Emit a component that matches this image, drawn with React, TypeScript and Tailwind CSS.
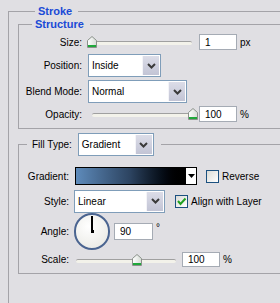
import React from 'react';

// Photoshop "Layer Style > Stroke" panel

function Chevron() {
  return (
    <svg width="9" height="6" viewBox="0 0 9 6">
      <path d="M1 1 L4.5 4.5 L8 1" fill="none" stroke="#3a3a3a" strokeWidth="2" />
    </svg>
  );
}

function Select({ value, className }: { value: string; className: string }) {
  return (
    <div className={`flex h-[23px] shrink-0 border border-[#7f9db9] bg-white ${className}`}>
      <span className="flex flex-1 items-center pl-[3px]">{value}</span>
      <div className="m-px flex w-[17px] items-center justify-center border-l border-[#f4f4f8] bg-gradient-to-b from-[#dcdde8] to-[#c2c4d5]">
        <Chevron />
      </div>
    </div>
  );
}

function Thumb({ className }: { className: string }) {
  return (
    <svg width="10" height="12" viewBox="0 0 10 12" className={className}>
      <defs>
        <linearGradient id="thumbg" x1="0" y1="0" x2="1" y2="0">
          <stop offset="0" stopColor="#ffffff" />
          <stop offset="1" stopColor="#d6dcd6" />
        </linearGradient>
      </defs>
      <path d="M5 0.5 L9.5 4.5 V11.5 H0.5 V4.5 Z" fill="url(#thumbg)" stroke="#8a918a" />
      <rect x="1" y="9" width="8" height="2" fill="#1fa83a" />
    </svg>
  );
}

function Slider({ className, thumb }: { className: string; thumb: string }) {
  return (
    <div className={`relative h-[12px] shrink-0 ${className}`}>
      <div className="absolute left-[5px] right-[5px] top-[5px] h-[4px] rounded-[2px] border-t border-[#a0a0a0] bg-[#f3f2ea]" />
      <Thumb className={`absolute top-0 ${thumb}`} />
    </div>
  );
}

function NumBox({ value, className }: { value: string; className: string }) {
  return (
    <div className={`flex shrink-0 items-center border border-[#a5abb4] bg-white pl-[5px] ${className}`}>
      {value}
    </div>
  );
}

function Check({ checked }: { checked?: boolean }) {
  return (
    <div className="flex h-[13px] w-[13px] shrink-0 items-center justify-center border border-[#1c5180] bg-gradient-to-br from-[#dcdcd7] to-white">
      {checked && (
        <svg width="11" height="11" viewBox="0 0 11 11">
          <path d="M2 5 L4.5 8 L9.5 2.5" fill="none" stroke="#21a121" strokeWidth="2" />
        </svg>
      )}
    </div>
  );
}

export default function App() {
  return (
    <div className="h-[303px] w-[280px] overflow-hidden bg-[#e0dfe3] font-['Liberation_Sans',Arial,sans-serif] text-[10px] leading-[13px] text-black">
      {/* Stroke group */}
      <fieldset className="ml-[8px] mt-[5px] h-[320px] w-[300px] border-l border-t border-[#a4a3a8] pl-[9px]">
        <legend className="ml-[17px] pl-[3px] pr-[6px] text-[11px] font-bold text-[#1a4ad6]">Stroke</legend>

        {/* Structure */}
        <fieldset className="w-[280px] border-b border-l border-t border-[#a4a3a8] pb-[6px]">
          <legend className="ml-[13px] pl-[3px] pr-[6px] text-[11px] font-bold text-[#1a4ad6]">Structure</legend>

          <div className="mt-[3px] flex h-[16px] items-center">
            <span className="w-[63px] text-right">Size:</span>
            <Slider className="ml-[5px] w-[110px]" thumb="left-0" />
            <NumBox value="1" className="ml-[2px] h-[16px] w-[38px]" />
            <span className="ml-[3px]">px</span>
          </div>

          <div className="mt-[4px] flex h-[23px] items-center">
            <span className="w-[63px] text-right">Position:</span>
            <Select value="Inside" className="ml-[6px] w-[73px]" />
          </div>

          <div className="mt-[3px] flex h-[23px] items-center">
            <span className="w-[63px] text-right">Blend Mode:</span>
            <Select value="Normal" className="ml-[6px] w-[99px]" />
          </div>

          <div className="mt-[3px] flex h-[16px] items-center">
            <span className="w-[63px] text-right">Opacity:</span>
            <Slider className="ml-[5px] w-[110px]" thumb="left-[101px]" />
            <NumBox value="100" className="ml-[2px] h-[16px] w-[38px]" />
            <span className="ml-[3px]">%</span>
          </div>
        </fieldset>

        {/* Fill */}
        <fieldset className="mt-[4px] w-[280px] border-b border-l border-t border-[#a4a3a8] pb-[6px]">
          <legend className="ml-[8px] flex items-center pl-[5px] pr-[7px]">
            <span>Fill Type:</span>
            <Select value="Gradient" className="ml-[6px] w-[76px]" />
          </legend>

          <div className="mt-[11px] flex h-[18px] items-center">
            <span className="w-[50px] text-right">Gradient:</span>
            <div className="ml-[6px] flex h-[18px] w-[122px] border border-black">
              <div className="flex-1 bg-gradient-to-r from-[#5e8bbb] via-[#2c4360] to-black" />
              <div className="flex w-[11px] items-center justify-center border-l border-black bg-white">
                <svg width="7" height="4" viewBox="0 0 7 4">
                  <path d="M0 0 H7 L3.5 4 Z" fill="#000" />
                </svg>
              </div>
            </div>
            <div className="ml-[9px]">
              <Check />
            </div>
            <span className="ml-[3px]">Reverse</span>
          </div>

          <div className="mt-[5px] flex h-[22px] items-center">
            <span className="w-[50px] text-right">Style:</span>
            <Select value="Linear" className="ml-[5px] h-[22px] w-[91px]" />
            <div className="ml-[10px]">
              <Check checked />
            </div>
            <span className="ml-[3px]">Align with Layer</span>
          </div>

          <div className="mt-px flex h-[37px] items-center">
            <span className="w-[50px] text-right">Angle:</span>
            <div className="relative ml-[5px] flex h-[37px] w-[36px] shrink-0 justify-center rounded-full border-2 border-[#4a6490] bg-[radial-gradient(circle_at_40%_35%,#ffffff,#e6e6e0)]">
              <div className="mt-px h-[16px] w-[2px] bg-black" />
              <div className="absolute left-[15px] top-[15px] h-[3px] w-[3px] bg-black" />
            </div>
            <NumBox value="90" className="ml-[4px] h-[17px] w-[39px]" />
            <span className="ml-[3px] self-start pt-[8px]">°</span>
          </div>

          <div className="mt-[2px] flex h-[15px] items-center">
            <span className="w-[50px] text-right">Scale:</span>
            <Slider className="ml-[2px] w-[110px]" thumb="left-[61px]" />
            <NumBox value="100" className="ml-[1px] h-[15px] w-[38px]" />
            <span className="ml-[3px]">%</span>
          </div>
        </fieldset>
      </fieldset>
    </div>
  );
}
